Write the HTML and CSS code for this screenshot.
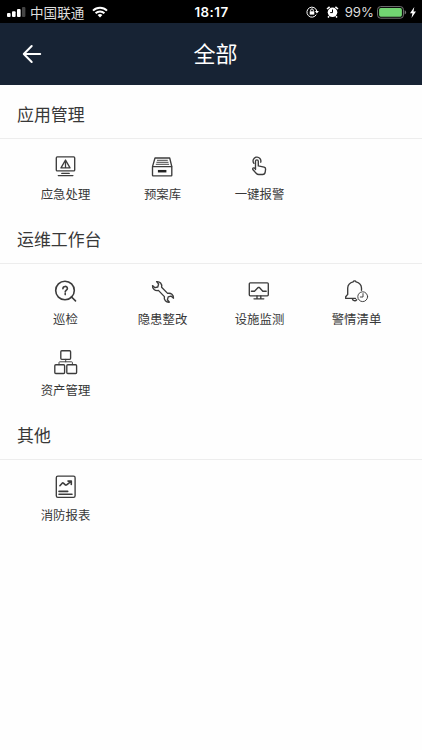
FILE: index.html
```html
<!DOCTYPE html>
<html lang="zh-CN">
<head>
<meta charset="utf-8">
<title>全部</title>
<link rel="stylesheet" href="styles.css">
</head>
<body>
<div class="status">
  <div class="status-left">
    <svg class="signal" width="19" height="12" viewBox="0 0 19 12"><rect x="0" y="7" width="3.6" height="4" rx="1"/><rect x="5" y="5.3" width="3.6" height="5.7" rx="1"/><rect x="10" y="3" width="3.6" height="8" rx="1"/><rect x="15" y="1" width="3.4" height="10" rx="1" fill="#444"/></svg>
    <span class="carrier">中国联通</span>
    <svg width="16" height="12" viewBox="0 0 16 12" fill="none" stroke="#fff" stroke-width="2"><path d="M1 4.6a10 10 0 0 1 14 0M3.6 7.3a6.2 6.2 0 0 1 8.8 0"/><path d="M8 11.4 5.6 9.1a3.4 3.4 0 0 1 4.8 0z" fill="#fff" stroke="none"/></svg>
  </div>
  <span class="time">18:17</span>
  <div class="status-right">
    <svg class="lock" width="13" height="12" viewBox="0 0 13 12" fill="none" stroke="#fff"><path d="M10.3 8.6A5 5 0 1 1 10.8 5"/><path d="M8.9 5h4l-2 2.6z" fill="#fff" stroke="none"/><rect x="3.7" y="5.3" width="4.6" height="3.3" fill="#fff" stroke="none"/><path d="M4.7 5.4V4.2a1.3 1.3 0 0 1 2.6 0v1.2"/></svg>
    <svg class="alarm" width="13" height="12" viewBox="0 0 13 12" fill="none"><circle cx="6.5" cy="6.3" r="4.8" fill="#fff"/><path d="M1 3 3.6.9M12 3 9.4.9M3 10.3l-1 1.2M10 10.3l1 1.2" stroke="#fff" stroke-width="1.6"/><path d="M6.5 3.5v3.1H4.2" stroke="#000"/></svg>
    <span class="percent">99%</span>
    <svg class="battery" width="30" height="13" viewBox="0 0 30 13"><rect x=".6" y=".6" width="25.8" height="11.6" rx="3" fill="none" stroke="#777"/><rect x="2.1" y="2.1" width="22.8" height="8.6" rx="1.6" fill="#72d572"/><path d="M27.6 4.3q1.5.6 1.5 2.1t-1.5 2.1z" fill="#777"/></svg>
    <svg width="6" height="11" viewBox="0 0 6 11"><path d="M4.3 0 0 6.2h2.4L1.5 11 6 4.4H3.5z" fill="#fff"/></svg>
  </div>
</div>
<header class="header">
  <svg class="back" width="20" height="20" viewBox="0 0 20 20"><path d="M18.2 10H2M9.7 2 1.8 10l7.9 8"/></svg>
  <h1>全部</h1>
</header>
<main>
  <section>
    <h2>应用管理</h2>
    <div class="grid">
      <div class="item">
        <svg class="icon" viewBox="0 0 27 28"><rect x="4.3" y="3.9" width="18.4" height="14" rx="1"/><path d="M13.5 7 18 14.9H9zM13.5 9.5v3M13.5 13.2v.9"/><path d="M9.8 20.4h7.4M6.3 22.6h14.6"/></svg>
        <span>应急处理</span>
      </div>
      <div class="item">
        <svg class="icon" viewBox="0 0 27 28"><path d="M3.5 13.6 6 5h14.7l2.1 8.6"/><rect x="3.5" y="13.6" width="19.3" height="9.2" rx=".6"/><path class="thin" d="M8.4 7.3h10M7.8 9.3h11.3M7.2 11.3h12.5"/><path d="M8.9 18.2h8.5" stroke="#222" class="slot"/></svg>
        <span>预案库</span>
      </div>
      <div class="item">
        <svg class="icon" viewBox="0 0 27 28"><path d="M7.9 10.4a3.9 3.9 0 1 1 6.8-1.2"/><path d="M9.5 16.5V8.2a1.4 1.4 0 0 1 2.8 0v4.7l5.8 1.3q1.6.4 1.5 1.9l-.4 3q-.3 2.4-2.6 2.4h-3.9q-1.4 0-2.3-1L7 16.8q-.7-1 .1-1.7t2.4 1"/></svg>
        <span>一键报警</span>
      </div>
    </div>
  </section>
  <section>
    <h2>运维工作台</h2>
    <div class="grid">
      <div class="item">
        <svg class="icon" viewBox="0 0 27 28"><circle class="bold" cx="13" cy="12.5" r="9.3"/><path class="bold" d="m19.3 18.7 4.2 4.2"/><path class="bold" d="M10.9 10.8c0-3.2 4.5-3 4.5-.4 0 1.8-2.2 1.7-2.2 3.7M13.2 15.6v1"/></svg>
        <span>巡检</span>
      </div>
      <div class="item">
        <svg class="icon" viewBox="0 0 27 28"><path d="M7.6 3.6C10.8 3.2 13.4 5.8 12.6 9.2l6 6.2c3.4-.8 6.2 1.6 5.9 4.8L22 18.1l-2.8.7-.8 3 2 2.4c-3.2.4-5.8-2.2-5-5.6l-6-6.2C6 13.2 3.2 10.8 3.5 7.6L6 9.7 8.8 9l.8-3z"/></svg>
        <span>隐患整改</span>
      </div>
      <div class="item">
        <svg class="icon" viewBox="0 0 27 28"><rect x="3.3" y="4.8" width="19" height="13" rx="1"/><path d="M5.4 13.2h3.1l3.6-3.7h1.3l3.4 3.7h3.4M11 18v2.6M14.8 18v2.6M8 20.8h9.8"/></svg>
        <span>设施监测</span>
      </div>
      <div class="item">
        <svg class="icon" viewBox="0 0 27 28"><path d="M12.5 20.4H2.7V18.8l2-2.4V10q.3-4.8 5.4-6.1a1.6 1.6 0 0 1 3 0q5.1 1.3 5.4 6.1v2.3M9.3 20.6a2.5 2.5 0 0 0 4.4 1.2"/><circle class="thin" cx="19.7" cy="18.7" r="4.9"/><path class="thin" d="M20 15.6V19h-2.7"/></svg>
        <span>警情清单</span>
      </div>
      <div class="item">
        <svg class="icon" viewBox="0 0 27 28"><rect x="8.8" y="1.7" width="9.8" height="8.6" rx="1"/><rect x="2.8" y="15.7" width="9.8" height="8.8" rx="1"/><rect x="14.8" y="15.7" width="9.8" height="8.8" rx="1"/><path class="thin" d="M13.7 10.3v2.5M7 15.7v-2.2q0-.7.7-.7h12q.7 0 .7.7v2.2"/></svg>
        <span>资产管理</span>
      </div>
    </div>
  </section>
  <section>
    <h2>其他</h2>
    <div class="grid">
      <div class="item">
        <svg class="icon" viewBox="0 0 27 28"><rect x="4.3" y="2.1" width="18.8" height="21.2" rx="1.6"/><path class="bold" d="m7.9 11.7 2.3-2.5q.6-.5 1.2 0l1.9 1.7q.7.5 1.3-.1l4.2-3.2M16 7.1h3.3v3.3"/><path class="bold" d="M7 17.4h8.7M7 20.2h13"/></svg>
        <span>消防报表</span>
      </div>
    </div>
  </section>
</main>
</body>
</html>
```
FILE: styles.css
```css
* { box-sizing: border-box; }

body {
  margin: 0;
  height: 750px;
  overflow: hidden;
  background: #fefefe;
  color: #383838;
  font-family: "Liberation Sans", "Noto Sans CJK SC", sans-serif;
}

svg { display: block; flex: none; }

.status {
  display: grid;
  grid-template-columns: 1fr auto 1fr;
  align-items: center;
  height: 23px;
  padding: 0 6px 0 7px;
  background: #000;
  color: #fff;
  font-family: Inter, "Noto Sans CJK SC", sans-serif;
  line-height: 23px;
}

.status-left,
.status-right { display: flex; align-items: center; height: 23px; }

.status-right { justify-content: flex-end; }

.signal { margin-right: 4px; fill: #fff; }

.carrier {
  margin-right: 8px;
  padding-top: 2px;
  font-size: 13.6px;
  color: #ddd;
}

.time { padding-top: 1px; font-size: 13.3px; font-weight: 600; letter-spacing: .5px; }

.lock { margin-right: 7px; }

.alarm { margin-right: 6px; }

.percent { margin-right: 3px; padding-top: 1px; font-size: 13.2px; color: #ddd; }

.battery { margin-right: 3px; }

.header {
  display: grid;
  grid-template-columns: 60px 1fr 60px;
  align-items: center;
  height: 62px;
  background: #172334;
  color: #fff;
}

.back {
  margin-left: 22px;
  fill: none;
  stroke: #fff;
  stroke-width: 2;
  stroke-linecap: round;
  stroke-linejoin: round;
}

h1 {
  grid-column: 2;
  height: 62px;
  margin: 0 0 0 9px;
  padding-top: 2px;
  font-size: 22px;
  font-weight: 400;
  line-height: 60px;
  text-align: center;
}

h2 {
  height: 54px;
  margin: 0;
  padding: 5px 17px 0;
  border-bottom: 1px solid #ededed;
  font-size: 16.9px;
  font-weight: 400;
  line-height: 52px;
}

.grid {
  display: grid;
  grid-template-columns: repeat(4, 97px);
  padding: 0 17px;
}

.item {
  display: flex;
  flex-direction: column;
  align-items: center;
  height: 71px;
  padding-top: 14px;
  font-size: 12.4px;
  line-height: 18px;
}

.item span { margin-top: 5px; white-space: nowrap; }

.icon {
  width: 27px;
  height: 28px;
  fill: none;
  stroke: #3c3c3c;
  stroke-width: 1.35;
  stroke-linejoin: round;
  stroke-linecap: round;
}

.thin { stroke-width: .95; }

.bold { stroke-width: 1.6; }

.slot { stroke-width: 2.5; stroke-linecap: butt; }
```
